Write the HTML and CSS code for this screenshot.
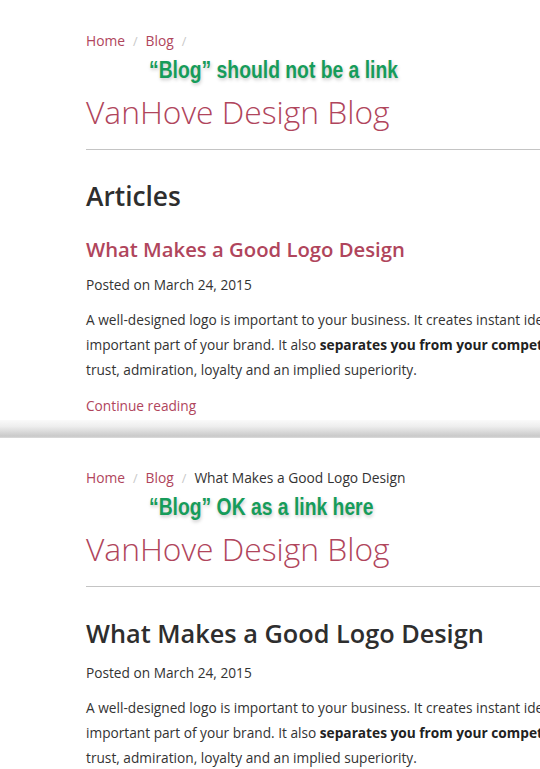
FILE: index.html
```html
<!DOCTYPE html>
<html lang="en">
<head>
<meta charset="utf-8">
<title>VanHove Design Blog</title>
<link rel="stylesheet" href="styles.css">
</head>
<body>
  <section class="shot shot-index">
    <nav class="crumbs">
      <a href="#">Home</a><span class="sep">/</span><a href="#">Blog</a><span class="sep">/</span>
    </nav>
    <p class="note"><span>“Blog” should not be a link</span></p>
    <p class="site-title">VanHove Design Blog</p>
    <hr class="rule">
    <h1 class="section-title">Articles</h1>
    <h2 class="post-link"><a href="#">What Makes a Good Logo Design</a></h2>
    <p class="meta">Posted on March 24, 2015</p>
    <p class="body">A well-designed logo is important to your business. It creates instant identity and is an<br>important part of your brand. It also <strong>separates you from your competitors</strong> and conveys<br>trust, admiration, loyalty and an implied superiority.</p>
    <a class="more" href="#">Continue reading</a>
  </section>
  <div class="fold"></div>
  <section class="shot shot-post">
    <nav class="crumbs">
      <a href="#">Home</a><span class="sep">/</span><a href="#">Blog</a><span class="sep">/</span><span class="current">What Makes a Good Logo Design</span>
    </nav>
    <p class="note"><span>“Blog” OK as a link here</span></p>
    <p class="site-title">VanHove Design Blog</p>
    <hr class="rule">
    <h1 class="post-title">What Makes a Good Logo Design</h1>
    <p class="meta">Posted on March 24, 2015</p>
    <p class="body">A well-designed logo is important to your business. It creates instant identity and is an<br>important part of your brand. It also <strong>separates you from your competitors</strong> and conveys<br>trust, admiration, loyalty and an implied superiority.</p>
  </section>
</body>
</html>
```

FILE: styles.css
```css
html, body {
  margin: 0;
  padding: 0;
  background: #fff;
}

body {
  width: 540px;
  height: 769px;
  overflow: hidden;
  font-family: "Open Sans", "Noto Sans", sans-serif;
  color: #333;
}

a {
  color: #b0455c;
  text-decoration: none;
}

p, h1, h2 {
  margin: 0;
}

.shot {
  padding-left: 86px;
  white-space: nowrap;
  overflow: hidden;
}

.shot-index {
  height: 420px;
  padding-top: 31px;
  box-sizing: border-box;
}

.shot-post {
  height: 331px;
  padding-top: 30px;
  box-sizing: border-box;
}

/* soft shadow where the first page is cut off */
.fold {
  height: 18px;
  background: linear-gradient(to bottom, #fafafa 0%, #eeeeee 35%, #c9c9c9 90%, #dcdcdc 100%);
}

.crumbs {
  font-size: 13.8px;
  line-height: 20px;
}

.crumbs .sep {
  color: #c8c8c8;
  margin: 0 8px;
  font-size: 12.5px;
}

.crumbs .current {
  color: #333;
}

.note {
  margin-top: 4px;
  margin-left: 63px;
  font-family: "Liberation Sans", "Arial", sans-serif;
  font-weight: 700;
  font-size: 23px;
  line-height: 28px;
  color: #169c5a;
  text-shadow: 1px 2px 4px rgba(0, 0, 0, 0.22);
}

/* condensed headline look for the callout */
.note span {
  display: inline-block;
  transform: scaleX(0.84);
  transform-origin: left center;
}

.site-title {
  margin-top: 8px;
  font-size: 31.8px;
  font-weight: 300;
  line-height: 40px;
  color: #b0455c;
}

.rule {
  margin: 17px 0 0;
  border: 0;
  height: 1px;
  background: #c4c4c4;
}

.section-title {
  margin-top: 29px;
  font-size: 26.3px;
  font-weight: 600;
  line-height: 34px;
  color: #2e2e2e;
}

.post-link {
  margin-top: 21px;
  font-size: 20.3px;
  font-weight: 600;
  line-height: 30px;
}

.post-link a {
  color: #b0455c;
}

.meta {
  margin-top: 9px;
  font-size: 13.7px;
  line-height: 24px;
}

.body {
  margin-top: 10px;
  font-size: 13.7px;
  line-height: 25px;
}

.body strong {
  font-weight: 700;
  color: #222;
}

.more {
  display: block;
  margin-top: 12px;
  font-size: 13.7px;
  line-height: 24px;
}

.post-title {
  margin-top: 29px;
  font-size: 25.3px;
  font-weight: 600;
  line-height: 34px;
  color: #2e2e2e;
}

.shot-post .meta {
  margin-top: 11px;
}
```
